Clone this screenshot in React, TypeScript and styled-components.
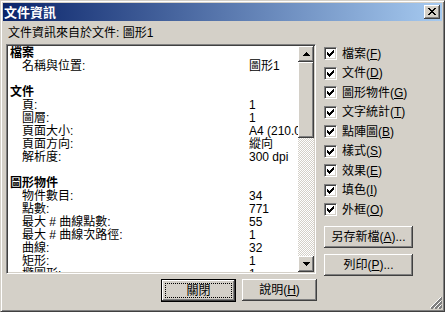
import React from "react";
import styled, { createGlobalStyle, css } from "styled-components";

const GlobalStyle = createGlobalStyle`
  html, body {
    margin: 0;
    padding: 0;
    background: #d4d0c8;
  }
  body {
    font-family: "Liberation Sans", "Noto Sans CJK TC", sans-serif;
    font-size: 12px;
    color: #000;
  }
  * {
    box-sizing: border-box;
  }
`;

const raised = css`
  background: #d4d0c8;
  box-shadow:
    inset -1px -1px #404040,
    inset 1px 1px #ffffff,
    inset -2px -2px #808080,
    inset 2px 2px #d4d0c8;
`;

const Window = styled.div`
  position: relative;
  width: 445px;
  height: 312px;
  display: flex;
  flex-direction: column;
  background: #d4d0c8;
  border: 1px solid;
  border-color: #d4d0c8 #404040 #404040 #d4d0c8;
  box-shadow:
    inset 1px 1px #ffffff,
    inset -1px -1px #808080;
  padding: 2px;
`;

const TitleBar = styled.div`
  height: 18px;
  display: flex;
  align-items: center;
  justify-content: space-between;
  padding: 0 2px 0 1px;
  background: linear-gradient(to right, #0a246a, #a6caf0);
`;

const TitleText = styled.span`
  color: #ffffff;
  font-family: "Noto Sans CJK TC", sans-serif;
  font-weight: 700;
  font-size: 13px;
  line-height: 18px;
`;

const CloseButton = styled.div`
  ${raised};
  width: 16px;
  height: 14px;
  display: flex;
  align-items: center;
  justify-content: center;
  padding-bottom: 1px;
`;

const Body = styled.div`
  flex: 1;
  display: flex;
  flex-direction: column;
  padding-left: 3px;
`;

const SourceLabel = styled.div`
  margin: 5px 0 4px 2px;
  line-height: 14px;
  white-space: nowrap;
`;

const Main = styled.div`
  display: flex;
  gap: 7px;
`;

const LeftColumn = styled.div`
  width: 311px;
  display: flex;
  flex-direction: column;
`;

const ListBox = styled.div`
  width: 310px;
  height: 230px;
  display: flex;
  background: #ffffff;
  border: 1px solid;
  border-color: #808080 #ffffff #ffffff #808080;
  box-shadow:
    inset 1px 1px #404040,
    inset -1px -1px #d4d0c8;
  padding: 1px;
`;

const ListContent = styled.div`
  flex: 1;
  overflow: hidden;
  padding-top: 1px;
`;

const ListRow = styled.div<{ $heading?: boolean }>`
  display: flex;
  height: 13px;
  line-height: 13px;
  white-space: nowrap;
  font-weight: ${(p) => (p.$heading ? 700 : 400)};
`;

const RowLabel = styled.span<{ $heading?: boolean }>`
  flex: none;
  width: 241px;
  padding-left: ${(p) => (p.$heading ? "2px" : "14px")};
`;

const RowValue = styled.span`
  flex: none;
`;

const ScrollBar = styled.div`
  width: 16px;
  display: flex;
  flex-direction: column;
`;

const ScrollButton = styled.div`
  ${raised};
  height: 16px;
  display: flex;
  align-items: center;
  justify-content: center;
`;

const ScrollThumb = styled.div`
  ${raised};
  height: 76px;
`;

const ScrollTrack = styled.div`
  flex: 1;
  background-color: #ffffff;
  background-image: repeating-conic-gradient(#d4d0c8 0 25%, #ffffff 0 50%);
  background-size: 2px 2px;
`;

const ButtonRow = styled.div`
  display: flex;
  justify-content: flex-end;
  gap: 6px;
  margin-top: 5px;
`;

const PushButton = styled.div<{ $isDefault?: boolean; $width?: number }>`
  ${raised};
  position: relative;
  width: ${(p) => p.$width ?? 75}px;
  height: ${(p) => (p.$isDefault ? 23 : 22)}px;
  display: flex;
  align-items: center;
  justify-content: center;
  white-space: nowrap;
  line-height: 14px;
  ${(p) =>
    p.$isDefault &&
    css`
      border: 1px solid #000;
      &::after {
        content: "";
        position: absolute;
        inset: 3px;
        border: 1px dotted #000;
      }
    `}
`;

const RightColumn = styled.div`
  width: 89px;
  display: flex;
  flex-direction: column;
`;

const CheckRow = styled.div`
  height: 19.5px;
  display: flex;
  align-items: center;
  gap: 5px;
  white-space: nowrap;
  line-height: 14px;
`;

const CheckBox = styled.span`
  width: 13px;
  height: 13px;
  flex: none;
  display: flex;
  align-items: center;
  justify-content: center;
  background: #ffffff;
  border: 1px solid;
  border-color: #808080 #ffffff #ffffff #808080;
  box-shadow:
    inset 1px 1px #404040,
    inset -1px -1px #d4d0c8;
`;

const SideButtons = styled.div`
  display: flex;
  flex-direction: column;
  gap: 6px;
  margin-top: 6px;
`;

const Grip = styled.svg`
  position: absolute;
  right: 2px;
  bottom: 2px;
`;

const CheckMark = () => (
  <svg width="7" height="7" viewBox="0 0 7 7" shapeRendering="crispEdges">
    <path
      fill="#000"
      d="M0 2h1v3H0zM1 3h1v3H1zM2 4h1v3H2zM3 3h1v3H3zM4 2h1v3H4zM5 1h1v3H5zM6 0h1v3H6z"
    />
  </svg>
);

const CloseGlyph = () => (
  <svg width="8" height="7" viewBox="0 0 8 7" shapeRendering="crispEdges">
    <path
      fill="#000"
      d="M0 0h2v1H0zM6 0h2v1H6zM1 1h2v1H1zM5 1h2v1H5zM2 2h4v1H2zM3 3h2v1H3zM2 4h4v1H2zM1 5h2v1H1zM5 5h2v1H5zM0 6h2v1H0zM6 6h2v1H6z"
    />
  </svg>
);

const Arrow = ({ down }: { down?: boolean }) => (
  <svg width="7" height="4" viewBox="0 0 7 4" shapeRendering="crispEdges">
    <path
      fill="#000"
      d={
        down
          ? "M0 0h7v1H0zM1 1h5v1H1zM2 2h3v1H2zM3 3h1v1H3z"
          : "M3 0h1v1H3zM2 1h3v1H2zM1 2h5v1H1zM0 3h7v1H0z"
      }
    />
  </svg>
);

type Row = { label: string; value?: string; heading?: boolean } | null;

const rows: Row[] = [
  { label: "檔案", heading: true },
  { label: "名稱與位置:", value: "圖形1" },
  null,
  { label: "文件", heading: true },
  { label: "頁:", value: "1" },
  { label: "圖層:", value: "1" },
  { label: "頁面大小:", value: "A4 (210.0 x 297.0 公釐)" },
  { label: "頁面方向:", value: "縱向" },
  { label: "解析度:", value: "300 dpi" },
  null,
  { label: "圖形物件", heading: true },
  { label: "物件數目:", value: "34" },
  { label: "點數:", value: "771" },
  { label: "最大 # 曲線點數:", value: "55" },
  { label: "最大 # 曲線次路徑:", value: "1" },
  { label: "曲線:", value: "32" },
  { label: "矩形:", value: "1" },
  { label: "橢圓形:", value: "1" },
];

const options: [string, string][] = [
  ["檔案", "F"],
  ["文件", "D"],
  ["圖形物件", "G"],
  ["文字統計", "T"],
  ["點陣圖", "B"],
  ["樣式", "S"],
  ["效果", "E"],
  ["填色", "I"],
  ["外框", "O"],
];

export default function App() {
  return (
    <>
      <GlobalStyle />
      <Window>
        <TitleBar>
          <TitleText>文件資訊</TitleText>
          <CloseButton>
            <CloseGlyph />
          </CloseButton>
        </TitleBar>
        <Body>
          <SourceLabel>文件資訊來自於文件: 圖形1</SourceLabel>
          <Main>
            <LeftColumn>
              <ListBox>
                <ListContent>
                  {rows.map((r, i) =>
                    r ? (
                      <ListRow key={i} $heading={r.heading}>
                        <RowLabel $heading={r.heading}>{r.label}</RowLabel>
                        {r.value && <RowValue>{r.value}</RowValue>}
                      </ListRow>
                    ) : (
                      <ListRow key={i} />
                    )
                  )}
                </ListContent>
                <ScrollBar>
                  <ScrollButton>
                    <Arrow />
                  </ScrollButton>
                  <ScrollThumb />
                  <ScrollTrack />
                  <ScrollButton>
                    <Arrow down />
                  </ScrollButton>
                </ScrollBar>
              </ListBox>
              <ButtonRow>
                <PushButton $isDefault>關閉</PushButton>
                <PushButton>
                  說明(<u>H</u>)
                </PushButton>
              </ButtonRow>
            </LeftColumn>
            <RightColumn>
              {options.map(([label, key]) => (
                <CheckRow key={key}>
                  <CheckBox>
                    <CheckMark />
                  </CheckBox>
                  <span>
                    {label}(<u>{key}</u>)
                  </span>
                </CheckRow>
              ))}
              <SideButtons>
                <PushButton $width={89}>
                  另存新檔(<u>A</u>)...
                </PushButton>
                <PushButton $width={89}>
                  列印(<u>P</u>)...
                </PushButton>
              </SideButtons>
            </RightColumn>
          </Main>
        </Body>
        <Grip width="12" height="12" viewBox="0 0 12 12" shapeRendering="crispEdges">
          <path stroke="#ffffff" d="M11 0L0 11M11 4L4 11M11 8L8 11" />
          <path stroke="#808080" strokeWidth="2" d="M12 1L1 12M12 5L5 12M12 9L9 12" />
        </Grip>
      </Window>
    </>
  );
}
